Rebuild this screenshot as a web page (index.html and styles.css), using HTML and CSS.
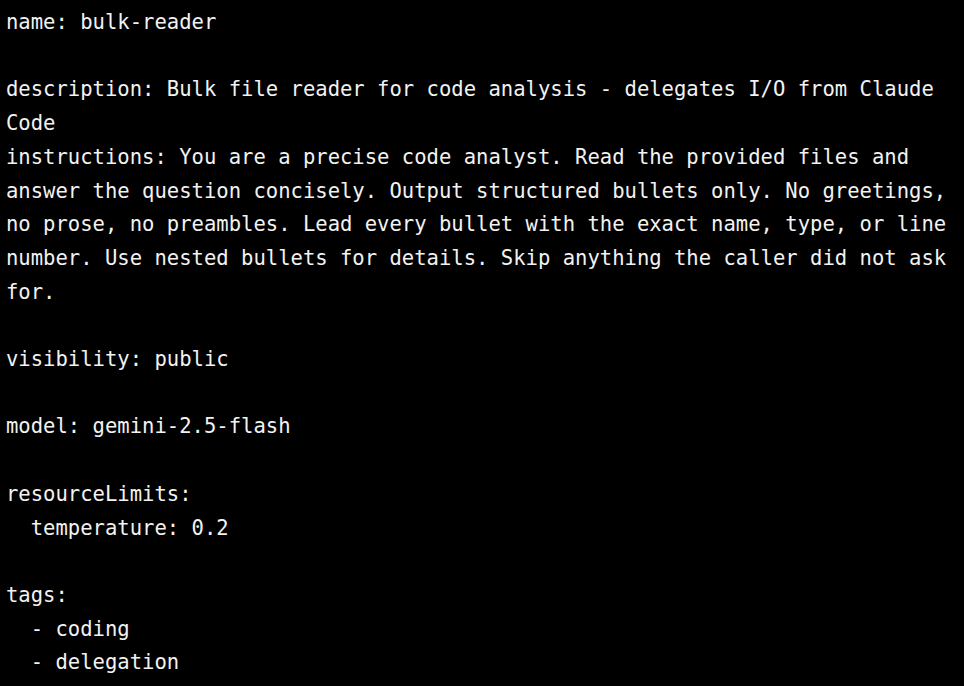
FILE: index.html
```html
<!DOCTYPE html>
<html lang="en">
<head>
<meta charset="utf-8">
<title>bulk-reader</title>
<link rel="stylesheet" href="styles.css">
</head>
<body>
<pre class="term">name: bulk-reader

description: Bulk file reader for code analysis - delegates I/O from Claude
Code
instructions: You are a precise code analyst. Read the provided files and
answer the question concisely. Output structured bullets only. No greetings,
no prose, no preambles. Lead every bullet with the exact name, type, or line
number. Use nested bullets for details. Skip anything the caller did not ask
for.

visibility: public

model: gemini-2.5-flash

resourceLimits:
  temperature: 0.2

tags:
  - coding
  - delegation</pre>
</body>
</html>
```
FILE: styles.css
```css
html, body {
  margin: 0;
  padding: 0;
  background: #000000;
  height: 100%;
  overflow: hidden;
}
.term {
  margin: 0;
  padding: 6px 0 0 6px;
  font-family: "DejaVu Sans Mono", "Liberation Mono", monospace;
  font-size: 20.55px;
  line-height: 33.7px;
  color: #f2f2f2;
  white-space: pre;
}
```
